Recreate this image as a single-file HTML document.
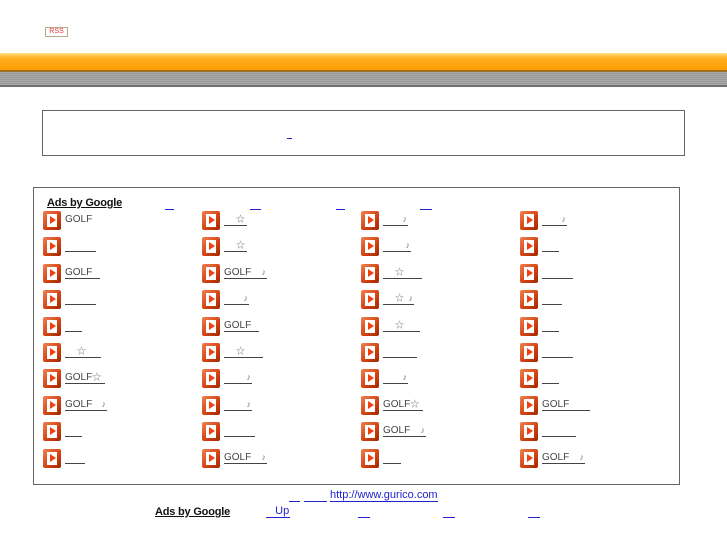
<!DOCTYPE html>
<html><head><meta charset="utf-8"><style>
body{margin:0;width:727px;height:545px;position:relative;background:#fff;font-family:"Liberation Sans","Noto Sans CJK JP",sans-serif;overflow:hidden}
.a{position:absolute}
.rss{left:45px;top:27px;width:21px;height:8px;border:1px solid #b8a888;font-size:7px;line-height:8px;color:#e33;text-align:center}
.ob{left:0;top:53px;width:727px;height:17px;background:linear-gradient(#ffe080,#ffb020 30%,#ff9c00)}
.br{left:0;top:70px;width:727px;height:2px;background:#a07020}
.gr{left:0;top:72px;width:727px;height:13px;background:repeating-linear-gradient(#a8a8a8 0 1px,#9a9a9a 1px 2px)}
.dl{left:0;top:85px;width:727px;height:2px;background:#707070}
.b1{left:42px;top:110px;width:641px;height:44px;border:1px solid #666}
.b2{left:33px;top:187px;width:645px;height:296px;border:1px solid #666}
.ic{position:absolute;width:18px;height:19px;border-radius:2px;background:linear-gradient(135deg,#f08050,#d04010 60%,#a02800)}
.ic:before{content:"";position:absolute;left:4px;top:3px;width:10px;height:13px;background:#fff}
.ic:after{content:"";position:absolute;left:7px;top:5px;border-left:6px solid #f04010;border-top:4.5px solid transparent;border-bottom:4.5px solid transparent}
.t{position:absolute;font-size:10px;color:#444;line-height:11px;height:11px;white-space:pre}
.t i{font-style:normal;font-size:9px;color:#777}
.t i.s{position:absolute;left:12px;top:0}
.t i.n{position:absolute;right:1px;top:0}
.u{border-bottom:1px solid #444}
.l{position:absolute;height:11px;border-bottom:1px solid #22c;font-size:10px;color:#22c;line-height:11px;white-space:pre}
.ag{position:absolute;font-size:11px;font-weight:bold;color:#111;text-decoration:underline;letter-spacing:-0.2px}
</style></head><body>
<div class="a rss">RSS</div>
<div class="a ob"></div><div class="a br"></div><div class="a gr"></div><div class="a dl"></div>
<div class="a b1"></div>
<div class="l" style="left:287px;top:127px;width:5px"></div>
<div class="a b2"></div>
<div class="ag" style="left:47px;top:197px">Ads by Google</div>
<div class="l" style="left:165px;top:198px;width:9px"></div>
<div class="l" style="left:250px;top:198px;width:11px"></div>
<div class="l" style="left:336px;top:198px;width:9px"></div>
<div class="l" style="left:420px;top:198px;width:12px"></div>

<div class="ic" style="left:43px;top:211px"></div><div class="ic" style="left:202px;top:211px"></div><div class="ic" style="left:361px;top:211px"></div><div class="ic" style="left:520px;top:211px"></div>
<div class="ic" style="left:43px;top:237px"></div><div class="ic" style="left:202px;top:237px"></div><div class="ic" style="left:361px;top:237px"></div><div class="ic" style="left:520px;top:237px"></div>
<div class="ic" style="left:43px;top:264px"></div><div class="ic" style="left:202px;top:264px"></div><div class="ic" style="left:361px;top:264px"></div><div class="ic" style="left:520px;top:264px"></div>
<div class="ic" style="left:43px;top:290px"></div><div class="ic" style="left:202px;top:290px"></div><div class="ic" style="left:361px;top:290px"></div><div class="ic" style="left:520px;top:290px"></div>
<div class="ic" style="left:43px;top:317px"></div><div class="ic" style="left:202px;top:317px"></div><div class="ic" style="left:361px;top:317px"></div><div class="ic" style="left:520px;top:317px"></div>
<div class="ic" style="left:43px;top:343px"></div><div class="ic" style="left:202px;top:343px"></div><div class="ic" style="left:361px;top:343px"></div><div class="ic" style="left:520px;top:343px"></div>
<div class="ic" style="left:43px;top:369px"></div><div class="ic" style="left:202px;top:369px"></div><div class="ic" style="left:361px;top:369px"></div><div class="ic" style="left:520px;top:369px"></div>
<div class="ic" style="left:43px;top:396px"></div><div class="ic" style="left:202px;top:396px"></div><div class="ic" style="left:361px;top:396px"></div><div class="ic" style="left:520px;top:396px"></div>
<div class="ic" style="left:43px;top:422px"></div><div class="ic" style="left:202px;top:422px"></div><div class="ic" style="left:361px;top:422px"></div><div class="ic" style="left:520px;top:422px"></div>
<div class="ic" style="left:43px;top:449px"></div><div class="ic" style="left:202px;top:449px"></div><div class="ic" style="left:361px;top:449px"></div><div class="ic" style="left:520px;top:449px"></div>

<div class="t" style="left:65px;top:214px">GOLF</div>
<div class="t u" style="left:65px;top:240px;width:31px"></div>
<div class="t u" style="left:65px;top:267px;width:35px">GOLF</div>
<div class="t u" style="left:65px;top:293px;width:31px"></div>
<div class="t u" style="left:65px;top:320px;width:17px"></div>
<div class="t u" style="left:65px;top:346px;width:36px"><i class="s">☆</i></div>
<div class="t u" style="left:65px;top:372px;width:40px">GOLF<i>☆</i></div>
<div class="t u" style="left:65px;top:399px;width:42px">GOLF<i class="n">♪</i></div>
<div class="t u" style="left:65px;top:425px;width:17px"></div>
<div class="t u" style="left:65px;top:452px;width:20px"></div>

<div class="t u" style="left:224px;top:214px;width:23px"><i class="s">☆</i></div>
<div class="t u" style="left:224px;top:240px;width:23px"><i class="s">☆</i></div>
<div class="t u" style="left:224px;top:267px;width:43px">GOLF<i class="n">♪</i></div>
<div class="t u" style="left:224px;top:293px;width:25px"><i class="n">♪</i></div>
<div class="t u" style="left:224px;top:320px;width:35px">GOLF</div>
<div class="t u" style="left:224px;top:346px;width:39px"><i class="s">☆</i></div>
<div class="t u" style="left:224px;top:372px;width:28px"><i class="n">♪</i></div>
<div class="t u" style="left:224px;top:399px;width:28px"><i class="n">♪</i></div>
<div class="t u" style="left:224px;top:425px;width:31px"></div>
<div class="t u" style="left:224px;top:452px;width:43px">GOLF<i class="n">♪</i></div>

<div class="t u" style="left:383px;top:214px;width:25px"><i class="n">♪</i></div>
<div class="t u" style="left:383px;top:240px;width:28px"><i class="n">♪</i></div>
<div class="t u" style="left:383px;top:267px;width:39px"><i class="s">☆</i></div>
<div class="t u" style="left:383px;top:293px;width:31px"><i class="s">☆</i><i class="n">♪</i></div>
<div class="t u" style="left:383px;top:320px;width:37px"><i class="s">☆</i></div>
<div class="t u" style="left:383px;top:346px;width:34px"></div>
<div class="t u" style="left:383px;top:372px;width:25px"><i class="n">♪</i></div>
<div class="t u" style="left:383px;top:399px;width:40px">GOLF<i>☆</i></div>
<div class="t u" style="left:383px;top:425px;width:43px">GOLF<i class="n">♪</i></div>
<div class="t u" style="left:383px;top:452px;width:18px"></div>

<div class="t u" style="left:542px;top:214px;width:25px"><i class="n">♪</i></div>
<div class="t u" style="left:542px;top:240px;width:17px"></div>
<div class="t u" style="left:542px;top:267px;width:31px"></div>
<div class="t u" style="left:542px;top:293px;width:20px"></div>
<div class="t u" style="left:542px;top:320px;width:17px"></div>
<div class="t u" style="left:542px;top:346px;width:31px"></div>
<div class="t u" style="left:542px;top:372px;width:17px"></div>
<div class="t u" style="left:542px;top:399px;width:48px">GOLF</div>
<div class="t u" style="left:542px;top:425px;width:34px"></div>
<div class="t u" style="left:542px;top:452px;width:43px">GOLF<i class="n">♪</i></div>

<div class="l" style="left:289px;top:490px;width:11px"></div>
<div class="l" style="left:304px;top:490px;width:23px"></div>
<div class="l" style="left:330px;top:490px;font-size:11px">http://www.gurico.com</div>
<div class="ag" style="left:155px;top:506px">Ads by Google</div>
<div class="l" style="left:266px;top:506px;width:24px;font-size:11px">   Up</div>
<div class="l" style="left:358px;top:506px;width:12px"></div>
<div class="l" style="left:443px;top:506px;width:12px"></div>
<div class="l" style="left:528px;top:506px;width:12px"></div>
</body></html>
